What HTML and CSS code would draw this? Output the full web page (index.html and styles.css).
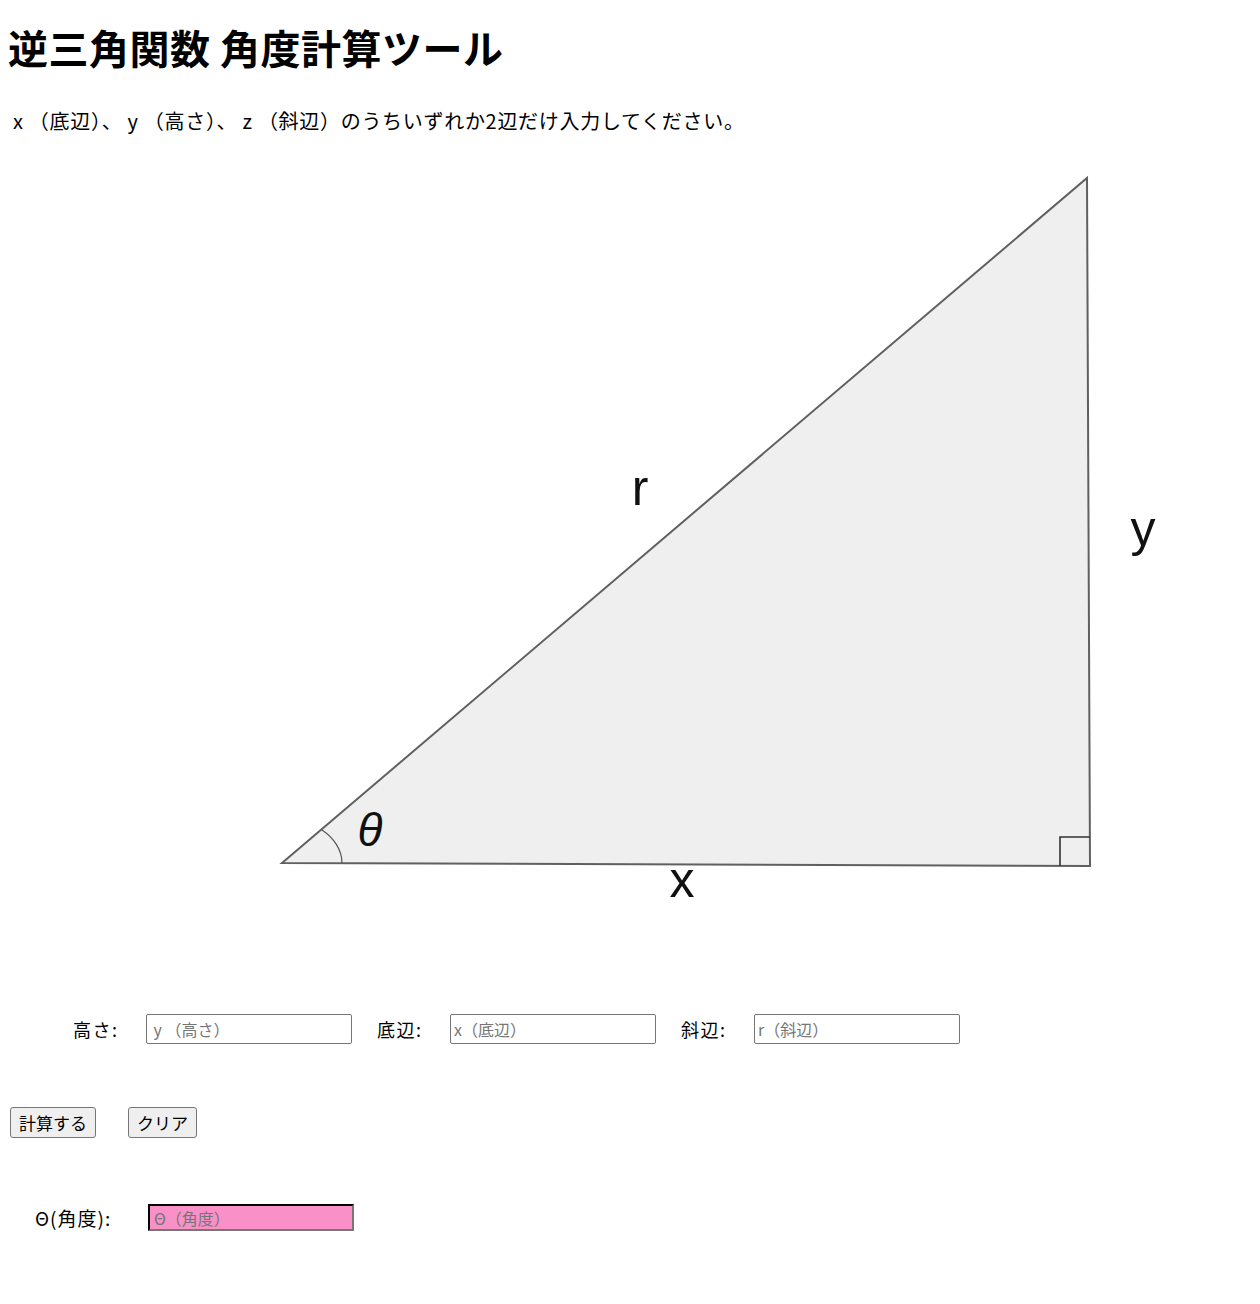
FILE: index.html
```html
<!DOCTYPE html>
<html lang="ja">
<head>
  <meta charset="UTF-8" />
  <title>逆三角関数 角度計算ツール</title>
  <link rel="stylesheet" href="styles.css">
</head>
<body>
  <h1 class="title">逆三角関数 角度計算ツール</h1>
  <p class="lead">x （底辺）、 y （高さ）、 z （斜辺）のうちいずれか2辺だけ入力してください。</p>

  <svg class="figure" width="1244" height="840" viewBox="0 0 1244 840">
    <polygon class="tri" points="274,712 1079,27 1082,715" />
    <polyline class="right" points="1052,715 1052,686 1082,686" />
    <path class="arc" d="M334,712 C334,699 326,687 314,679" />
    <text class="lbl" x="632" y="354">r</text>
    <text class="lbl" x="1135" y="395">y</text>
    <text class="lbl" x="674" y="746">x</text>
    <text class="lbl theta" x="362" y="695">θ</text>
  </svg>

  <div class="sides">
    <label class="side-lbl" for="y">高さ:</label>
    <input class="side" id="y" type="text" placeholder=" y （高さ）">
    <label class="side-lbl" for="x">底辺:</label>
    <input class="side" id="x" type="text" placeholder="x（底辺）">
    <label class="side-lbl" for="r">斜辺:</label>
    <input class="side" id="r" type="text" placeholder="r（斜辺）">
  </div>

  <div class="actions">
    <button class="btn" id="calc">計算する</button>
    <button class="btn" id="clear">クリア</button>
  </div>

  <div class="result">
    <label class="res-lbl" for="theta">Θ(角度):</label>
    <input class="res" id="theta" type="text" placeholder="Θ（角度）" readonly>
  </div>
</body>
</html>
```

FILE: styles.css
```css
body{
  margin:8px;
  font-family:"Noto Sans CJK JP","Noto Sans",sans-serif;
  color:#000;
  background:#fff;
}
.title{
  margin:15px 0 0;
  font-size:40px;line-height:48px;font-weight:bold;
  letter-spacing:0.5px;
}
.lead{
  margin:36px 0 0;padding-left:5px;
  font-size:20px;line-height:28px;
  letter-spacing:0.7px;
}
.figure{display:block;margin-top:16px;}
.tri{fill:#efefef;stroke:#606060;stroke-width:2;stroke-linejoin:miter;}
.right{fill:none;stroke:#333;stroke-width:1.6;}
.arc{fill:none;stroke:#555;stroke-width:1.2;}
.lbl{font-family:"Liberation Sans",Arial,sans-serif;font-size:50px;fill:#111;text-anchor:middle;}
.theta{font-style:italic;font-size:46px;}

.sides{
  display:flex;align-items:center;
  margin-top:23px;padding-left:65px;height:30px;
}
.side-lbl{width:73px;font-size:18px;line-height:30px;letter-spacing:1.5px;}
.side{
  box-sizing:border-box;width:206px;height:30px;margin:0 25px 0 0;
  padding:1px 3px;border:1px solid #767676;border-radius:2px;
  font-family:inherit;font-size:16px;
}
.side::placeholder,.res::placeholder{color:#757575;}

.actions{display:flex;gap:32px;margin-top:63px;padding-left:2px;}
.btn{
  height:31px;padding:0 8px;
  background:#efefef;border:1px solid #767676;border-radius:3px;
  font-family:inherit;font-size:17px;color:#000;
}

.result{
  display:flex;align-items:center;
  margin-top:66px;padding-left:27px;height:27px;
}
.res-lbl{width:113px;font-size:19px;line-height:27px;letter-spacing:1px;}
.res{
  box-sizing:border-box;width:206px;height:27px;margin:0;
  padding:0 4px;background:#f990c8;
  border:2px inset #767676;border-top-color:#333;border-left-color:#333;
  font-family:inherit;font-size:16px;
}
```
